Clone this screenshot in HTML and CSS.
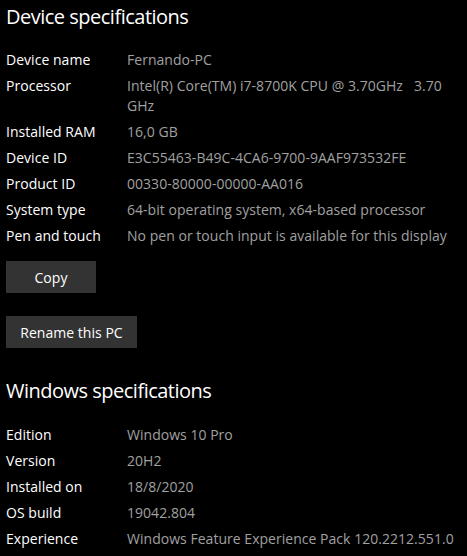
FILE: index.html
```html
<!DOCTYPE html>
<html>
<head>
<meta charset="utf-8">
<link rel="stylesheet" href="styles.css">
</head>
<body>
<div class="page">
  <h2 class="heading">Device specifications</h2>
  <div class="specs">
    <div class="row"><div class="label">Device name</div><div class="value">Fernando-PC</div></div>
    <div class="row"><div class="label">Processor</div><div class="value">Intel(R) Core(TM) i7-8700K CPU @ 3.70GHz&nbsp;&nbsp;&nbsp;3.70<br>GHz</div></div>
    <div class="row"><div class="label">Installed RAM</div><div class="value">16,0 GB</div></div>
    <div class="row"><div class="label">Device ID</div><div class="value">E3C55463-B49C-4CA6-9700-9AAF973532FE</div></div>
    <div class="row"><div class="label">Product ID</div><div class="value">00330-80000-00000-AA016</div></div>
    <div class="row"><div class="label">System type</div><div class="value">64-bit operating system, x64-based processor</div></div>
    <div class="row"><div class="label">Pen and touch</div><div class="value">No pen or touch input is available for this display</div></div>
  </div>
  <button class="btn btn-copy">Copy</button>
  <button class="btn btn-rename">Rename this PC</button>
  <h2 class="heading heading-win">Windows specifications</h2>
  <div class="specs">
    <div class="row"><div class="label">Edition</div><div class="value">Windows 10 Pro</div></div>
    <div class="row"><div class="label">Version</div><div class="value">20H2</div></div>
    <div class="row"><div class="label">Installed on</div><div class="value">18/8/2020</div></div>
    <div class="row"><div class="label">OS build</div><div class="value">19042.804</div></div>
    <div class="row"><div class="label">Experience</div><div class="value">Windows Feature Experience Pack 120.2212.551.0</div></div>
  </div>
</div>
</body>
</html>
```
FILE: styles.css
```css
html, body {
  margin: 0;
  padding: 0;
  background: #000;
}
body {
  font-family: "Open Sans", "Noto Sans", sans-serif;
  color: #fff;
  font-size: 14px;
  letter-spacing: 0.03px;
}
.page {
  display: flex;
  flex-direction: column;
  align-items: flex-start;
  padding: 3px 0 0 6px;
}
.heading {
  margin: 0;
  font-weight: 400;
  font-size: 20px;
  line-height: 28px;
  letter-spacing: -0.5px;
  color: #fff;
}
.specs {
  display: flex;
  flex-direction: column;
  gap: 6px;
  margin-top: 19px;
}
.heading-win {
  margin-top: 29px;
}
.heading-win + .specs {
  margin-top: 20px;
}
.row {
  display: grid;
  grid-template-columns: 121px 1fr;
  line-height: 20px;
}
.label {
  color: #fff;
}
.value {
  color: #a0a0a0;
}
.btn {
  font-family: inherit;
  font-size: 14px;
  letter-spacing: 0.03px;
  color: #fff;
  background: #333;
  border: none;
  height: 32px;
  padding: 0;
  white-space: nowrap;
}
.btn-copy {
  width: 90px;
  margin-top: 15px;
}
.btn-rename {
  width: 131px;
  margin-top: 23px;
}
```
